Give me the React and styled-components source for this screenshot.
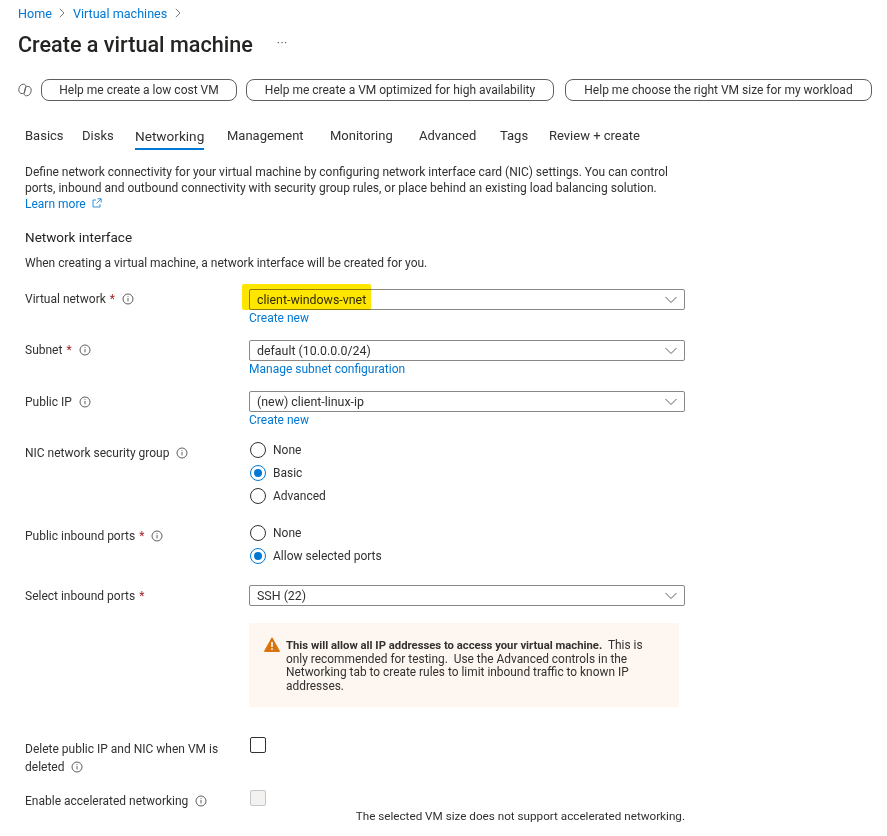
import React from 'react'
import styled, { createGlobalStyle } from 'styled-components'

const Global = createGlobalStyle`
  html, body { margin: 0; padding: 0; background: #fff; }
  body { font-family: Roboto, "Noto Sans", sans-serif; font-size: 12px; color: #292827; overflow: hidden; }
`

const Page = styled.div`
  width: 887px;
  height: 836px;
  overflow: hidden;
  position: relative;
`

const Header = styled.header`
  padding: 5px 0 0 18px;
`

const Crumbs = styled.nav`
  display: flex;
  align-items: center;
  height: 16px;
  gap: 7.5px;
  font-size: 12.6px;
  color: #0078d4;
`

const Title = styled.h1`
  margin: 9px 0 0;
  display: flex;
  align-items: center;
  height: 28px;
  font-size: 21.6px;
  font-weight: 500;
  color: #252423;
`

const More = styled.span`
  margin-left: 24px;
  font-size: 12px;
  font-weight: 400;
  color: #555;
  letter-spacing: 0.5px;
  position: relative;
  top: -1px;
`

const Prompts = styled.div`
  display: flex;
  align-items: center;
  margin: 21px 0 0 18px;
  height: 22px;
`

const Prompt = styled.button`
  height: 22px;
  width: ${p => p.$w}px;
  margin-left: ${p => p.$ml}px;
  padding: 0;
  background: #fff;
  border: 1px solid #605e5c;
  border-radius: 8px;
  font: inherit;
  font-size: 12px;
  color: #323130;
`

const CopilotMark = styled.svg`
  width: 14px;
  height: 14px;
  margin-right: 9px;
  fill: none;
  stroke: #605e5c;
`

const Tabs = styled.div`
  display: flex;
  height: 27px;
  margin: 23px 0 0 25px;
`

const Tab = styled.div`
  width: ${p => p.$w}px;
  flex: none;
  font-size: ${p => (p.$active ? 13.6 : 13)}px;
  line-height: 24px;
  color: #323130;
  span {
    display: inline-block;
    height: 24px;
    border-bottom: ${p => (p.$active ? '2px solid #0078d4' : '0')};
  }
`

const Body = styled.main`
  padding: 13px 0 0 25px;
`

const Para = styled.p`
  margin: 0;
  width: 660px;
  font-size: 12px;
  line-height: 16px;
  color: #323130;
`

const A = styled.a`
  color: #0078d4;
  font-size: 12px;
  line-height: 16px;
`

const ExternalMark = styled.svg`
  width: 10px;
  height: 10px;
  margin-left: 6px;
  fill: none;
  stroke: #0078d4;
  stroke-width: 0.8;
`

const Heading = styled.h2`
  margin: 17px 0 0;
  font-size: 13.5px;
  line-height: 16px;
  font-weight: 400;
  color: #252423;
`

const Sub = styled(Para)`
  margin-top: 10px;
`

const Row = styled.div`
  display: grid;
  grid-template-columns: 224px 436px;
  margin-top: ${p => p.$mt}px;
`

const Label = styled.div`
  font-size: 12px;
  line-height: 18px;
  color: #323130;
  padding-top: ${p => p.$pt || 0}px;
`

const Star = styled.span`
  color: #a4262c;
  margin-left: 4px;
`

const Info = styled.svg`
  width: 12px;
  height: 12px;
  margin-left: 7px;
  vertical-align: -2px;
  fill: none;
  stroke: #605e5c;
`

const Control = styled.div`
  display: flex;
  flex-direction: column;
  align-items: flex-start;
`

const Select = styled.div`
  box-sizing: border-box;
  width: 436px;
  height: 21px;
  display: flex;
  align-items: center;
  justify-content: space-between;
  padding: 0 7px;
  border: 1px solid #8a8886;
  border-radius: 2px;
  font-size: 12.4px;
  color: #323130;
`

const ChevronMark = styled.svg`
  width: 12px;
  height: 12px;
  fill: none;
  stroke: #605e5c;
`

const Highlight = styled.div`
  position: absolute;
  left: 242px;
  top: 284px;
  width: 129px;
  height: 26px;
  border-radius: 2px;
  background: #ffe600;
  mix-blend-mode: multiply;
`

const RadioRow = styled.label`
  display: flex;
  align-items: center;
  height: 23px;
  gap: 7px;
  font-size: 12px;
  color: #323130;
`

const Dot = styled.span`
  box-sizing: border-box;
  width: 16px;
  height: 16px;
  margin-left: 1px;
  border-radius: 50%;
  border: 1px solid ${p => (p.$on ? '#0078d4' : '#323130')};
  display: flex;
  align-items: center;
  justify-content: center;
  &::after {
    content: '';
    display: ${p => (p.$on ? 'block' : 'none')};
    width: 8px;
    height: 8px;
    border-radius: 50%;
    background: #0078d4;
  }
`

const Warn = styled.div`
  box-sizing: border-box;
  width: 430px;
  height: 84px;
  margin-top: 17px;
  padding: 16px 20px 0 15px;
  display: flex;
  gap: 6px;
  background: #fef7f1;
  font-size: 11.9px;
  line-height: 13.5px;
  color: #323130;
  b { font-weight: 700; font-size: 11.3px; }
`

const WarnMark = styled.svg`
  flex: none;
  width: 16px;
  height: 15px;
  margin-top: -2px;
`

const Check = styled.div`
  box-sizing: border-box;
  width: 16px;
  height: 16px;
  margin-left: 1px;
  border-radius: 2px;
  border: 1px solid ${p => (p.$off ? '#c8c6c4' : '#323130')};
  background: ${p => (p.$off ? '#f3f2f1' : '#fff')};
`

const Note = styled.div`
  width: 660px;
  margin-top: -2px;
  text-align: right;
  font-size: 11.7px;
  line-height: 16px;
  color: #323130;
`

const InfoIcon = () => (
  <Info viewBox="0 0 12 12">
    <circle cx="6" cy="6" r="5" />
    <path d="M6 5v3.4M6 3.2v.9" />
  </Info>
)

const Chevron = () => (
  <ChevronMark viewBox="0 0 12 12">
    <path d="M0.5 3 6 8.5 11.5 3" />
  </ChevronMark>
)

const CrumbSep = () => (
  <svg width="6" height="10" viewBox="0 0 6 10" fill="none" stroke="#7a7a7a">
    <path d="M.8.8 5 5 .8 9.2" />
  </svg>
)

const Copilot = () => (
  <CopilotMark viewBox="0 0 14 14">
    <path d="M5.6 1.2c1.6 0 2.4 1 2.2 2.3L6.7 8.6c-.3 1.3-1.2 2-2.5 2-2 0-3.4-1.5-3.4-3.8 0-3.2 2-5.6 4.8-5.6z" />
    <path d="M8.4 12.8c-1.6 0-2.4-1-2.2-2.3l1.1-5.1c.3-1.3 1.2-2 2.5-2 2 0 3.4 1.5 3.4 3.8 0 3.2-2 5.6-4.8 5.6z" />
  </CopilotMark>
)

const External = () => (
  <ExternalMark viewBox="0 0 10 10">
    <path d="M4 2H1v7h7V6M5.5.8h3.7v3.7M9 1 4.5 5.5" />
  </ExternalMark>
)

const WarnIcon = () => (
  <WarnMark viewBox="0 0 16 15">
    <path d="M8 .8 15.6 14.4H.4z" fill="#d9730d" stroke="#d9730d" strokeLinejoin="round" />
    <path d="M8 5v5M8 11.3v1.4" stroke="#fff" strokeWidth="1.6" />
  </WarnMark>
)

const Radio = ({ on, children }) => (
  <RadioRow>
    <Dot $on={on} />
    {children}
  </RadioRow>
)

const Dropdown = ({ children }) => (
  <Select>
    {children}
    <Chevron />
  </Select>
)

const tabs = [
  ['Basics', 57], ['Disks', 53], ['Networking', 92], ['Management', 103], ['Monitoring', 89],
  ['Advanced', 81], ['Tags', 49], ['Review + create', 110],
]

export default function App() {
  return (
    <Page>
      <Global />
      <Header>
        <Crumbs>
          <span>Home</span><CrumbSep /><span>Virtual machines</span><CrumbSep />
        </Crumbs>
        <Title>Create a virtual machine<More>···</More></Title>
      </Header>
      <Prompts>
        <Copilot />
        <Prompt $w={196} $ml={0}>Help me create a low cost VM</Prompt>
        <Prompt $w={308} $ml={9}>Help me create a VM optimized for high availability</Prompt>
        <Prompt $w={307} $ml={11}>Help me choose the right VM size for my workload</Prompt>
      </Prompts>
      <Tabs>
        {tabs.map(([t, w]) => (
          <Tab key={t} $w={w} $active={t === 'Networking'}><span>{t}</span></Tab>
        ))}
      </Tabs>
      <Body>
        <Para>
          Define network connectivity for your virtual machine by configuring network interface card (NIC) settings. You can control
          ports, inbound and outbound connectivity with security group rules, or place behind an existing load balancing solution.
          <br />
          <A>Learn more<External /></A>
        </Para>
        <Heading>Network interface</Heading>
        <Sub>When creating a virtual machine, a network interface will be created for you.</Sub>

        <Row $mt={18}>
          <Label $pt={1}>Virtual network<Star>*</Star><InfoIcon /></Label>
          <Control><Dropdown>client-windows-vnet</Dropdown><A>Create new</A></Control>
        </Row>
        <Row $mt={14}>
          <Label $pt={1}>Subnet<Star>*</Star><InfoIcon /></Label>
          <Control><Dropdown>default (10.0.0.0/24)</Dropdown><A>Manage subnet configuration</A></Control>
        </Row>
        <Row $mt={14}>
          <Label $pt={2}>Public IP<InfoIcon /></Label>
          <Control><Dropdown>(new) client-linux-ip</Dropdown><A>Create new</A></Control>
        </Row>
        <Row $mt={10}>
          <Label $pt={6}>NIC network security group<InfoIcon /></Label>
          <Control>
            <Radio>None</Radio>
            <Radio on>Basic</Radio>
            <Radio>Advanced</Radio>
          </Control>
        </Row>
        <Row $mt={14}>
          <Label $pt={6}>Public inbound ports<Star>*</Star><InfoIcon /></Label>
          <Control>
            <Radio>None</Radio>
            <Radio on>Allow selected ports</Radio>
          </Control>
        </Row>
        <Row $mt={18}>
          <Label $pt={2}>Select inbound ports<Star>*</Star></Label>
          <Control>
            <Dropdown>SSH (22)</Dropdown>
            <Warn>
              <WarnIcon />
              <div>
                <b>This will allow all IP addresses to access your virtual machine.</b>&nbsp; This is only recommended for testing.&nbsp; Use the Advanced controls in the Networking tab to create rules to limit inbound traffic to known IP addresses.
              </div>
            </Warn>
          </Control>
        </Row>
        <Row $mt={30}>
          <Label $pt={3}>Delete public IP and NIC when VM is deleted<InfoIcon /></Label>
          <Control><Check /></Control>
        </Row>
        <Row $mt={14}>
          <Label $pt={2}>Enable accelerated networking<InfoIcon /></Label>
          <Control><Check $off /></Control>
        </Row>
        <Note>The selected VM size does not support accelerated networking.</Note>
      </Body>
      <Highlight />
    </Page>
  )
}
